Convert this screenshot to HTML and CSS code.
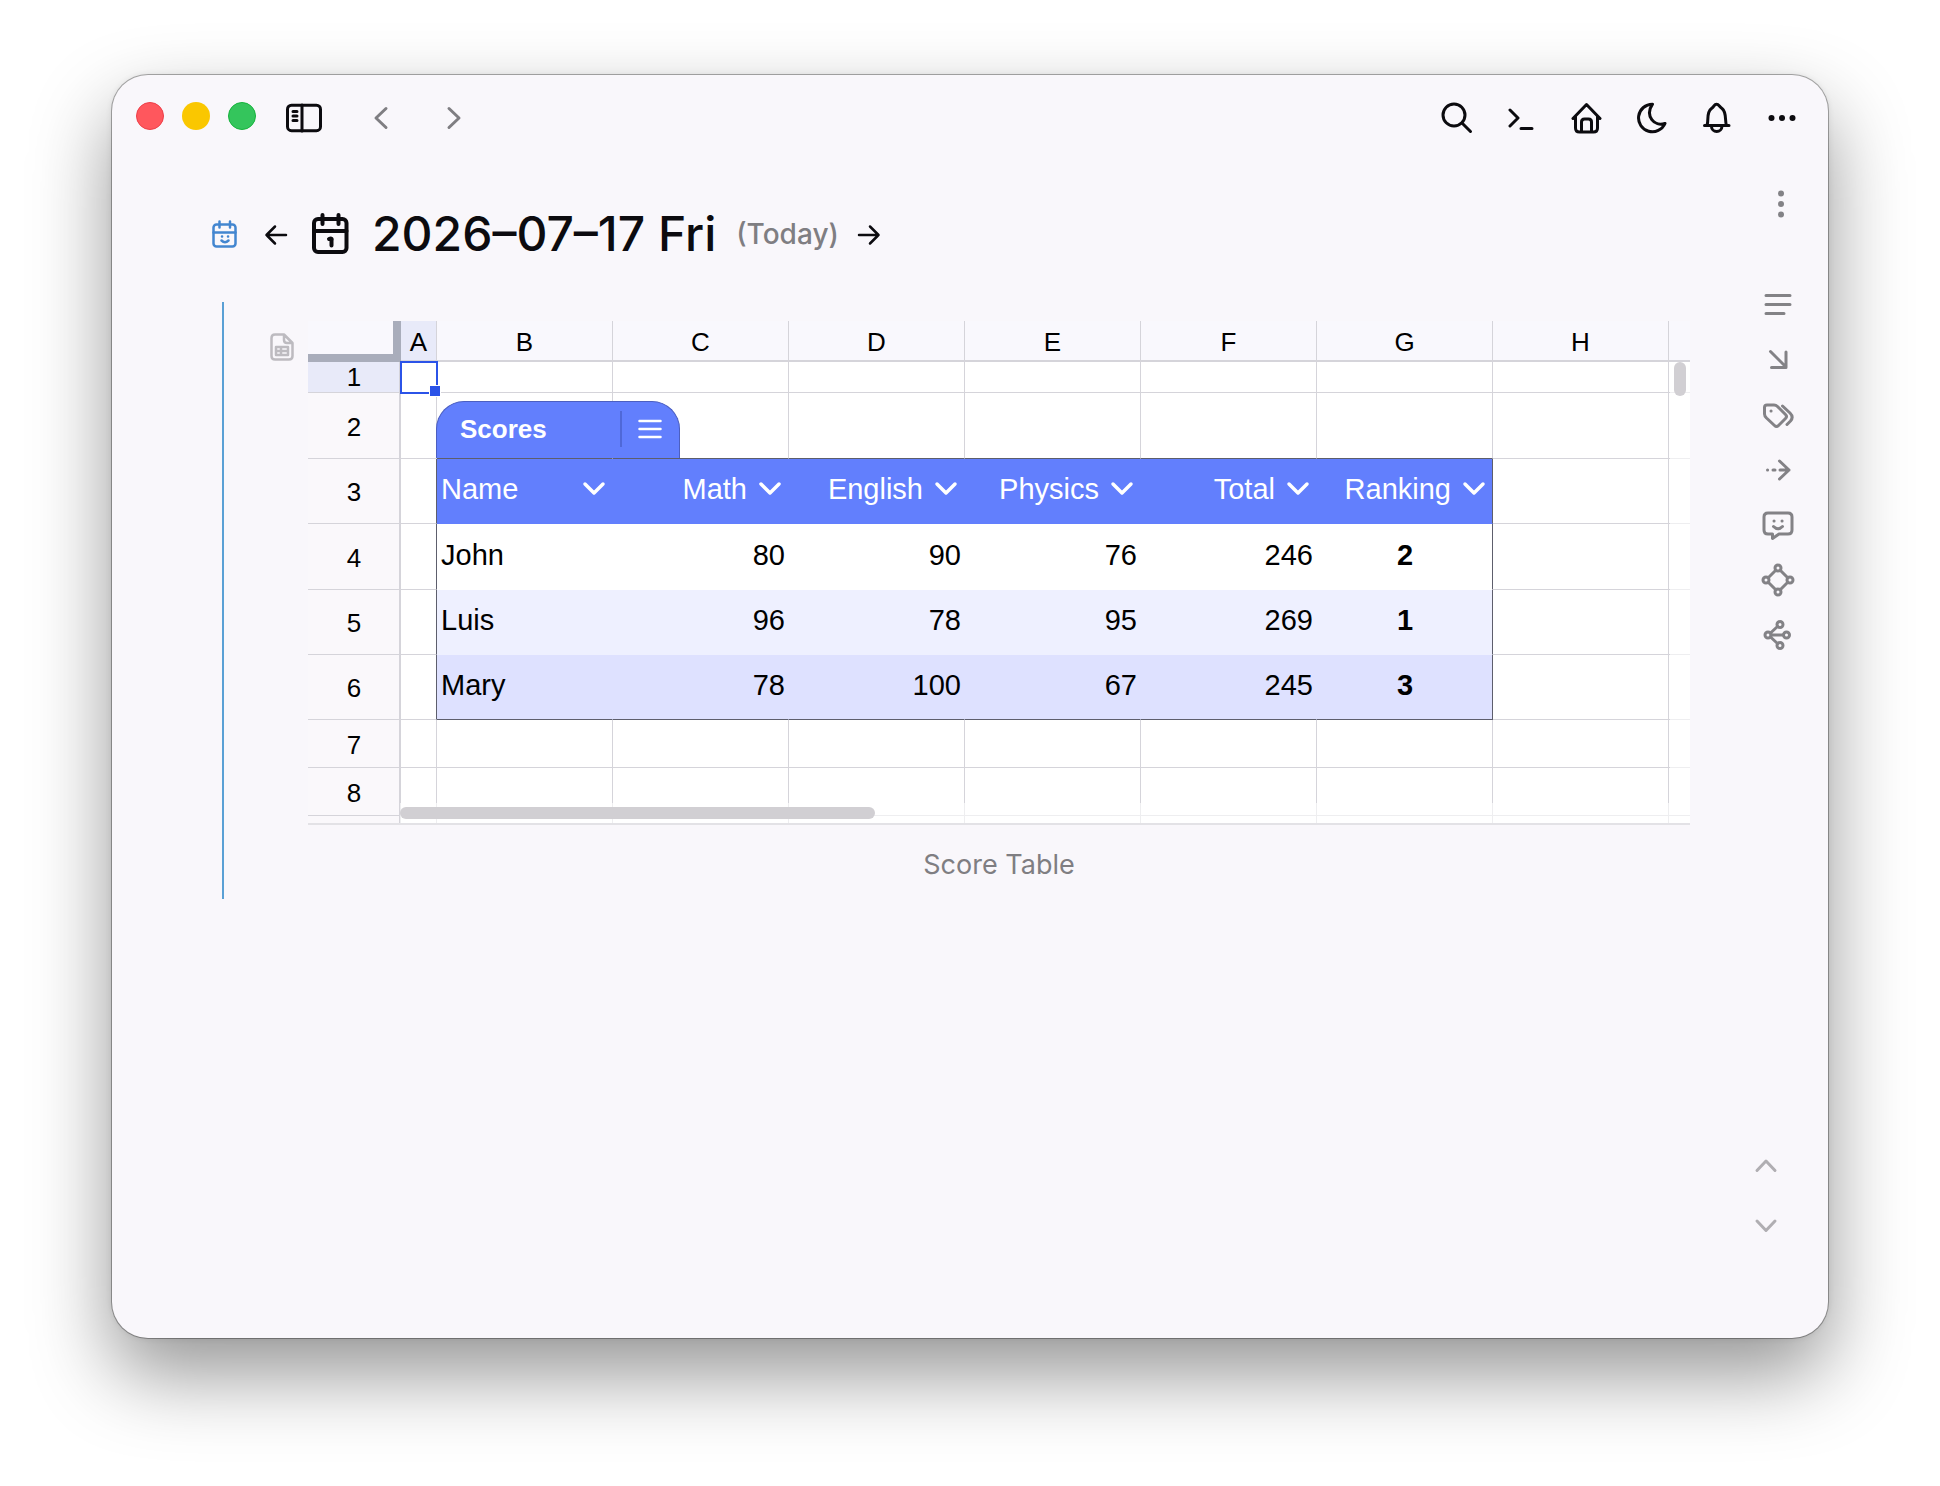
FILE: index.html
```html
<!DOCTYPE html>
<html lang="en">
<head>
    <meta charset="UTF-8">
    <meta name="viewport" content="width=device-width, initial-scale=1.0">
    <title>2026-07-17 Fri</title>
    <link rel="stylesheet" href="styles.css">
</head>
<body>
    <div class="window">
        <!-- Title bar -->
        <header class="titlebar">
            <div class="lights">
                <button class="light red" aria-label="Close"></button>
                <button class="light yellow" aria-label="Minimize"></button>
                <button class="light green" aria-label="Zoom"></button>
            </div>
            <button class="icon-btn sidebar-btn" aria-label="Toggle sidebar">
                <svg width="36" height="30" viewBox="0 0 36 30"><rect x="1.500" y="2.200" width="33" height="25.500" rx="4"/><path d="M16 2v26M7 8.500h4M7 13h4M7 17.500h4"/></svg>
            </button>
            <nav class="history">
                <button class="icon-btn" aria-label="Back">
                    <svg width="16" height="24" viewBox="0 0 16 24"><path d="M13 2.500 3 12l10 9.500"/></svg>
                </button>
                <button class="icon-btn" aria-label="Forward">
                    <svg width="16" height="24" viewBox="0 0 16 24"><path d="M3 2.500 13 12 3 21.500"/></svg>
                </button>
            </nav>
            <div class="actions">
                <button class="icon-btn" aria-label="Search">
                    <svg width="32" height="32" viewBox="0 0 32 32"><circle cx="13" cy="13" r="11"/><path d="m21 21 8.500 8.500"/></svg>
                </button>
                <button class="icon-btn" aria-label="Command">
                    <svg width="32" height="32" viewBox="0 0 32 32"><path d="m4 8 8 8-8 8M15 26.500h11"/></svg>
                </button>
                <button class="icon-btn" aria-label="Home">
                    <svg width="32" height="32" viewBox="0 0 32 32"><path d="M2 16.500 15.500 2.500l13.500 14M4.500 14.500V26q0 4 4 4h14q4 0 4-4V14.500M10.500 30V20q0-3 3-3h4q3 0 3 3v10"/></svg>
                </button>
                <button class="icon-btn" aria-label="Dark mode">
                    <svg width="32" height="32" viewBox="0 0 32 32"><path d="M16.500 2.200A13.800 13.800 0 1 0 29 21.500C18.500 25 8.500 14 16.500 2.200Z"/></svg>
                </button>
                <button class="icon-btn" aria-label="Notifications">
                    <svg width="32" height="32" viewBox="0 0 32 32"><path d="M3.500 23.500h24.500M6 23.500C8 18 5 10.500 10.500 6.500 13.500 4.500 13 2.300 15.500 2.300S18 4.500 21 6.500C26 10.500 23.500 18 25.500 23.500M10.500 24.500a5.200 5 0 0 0 10.400 0"/></svg>
                </button>
                <button class="icon-btn" aria-label="More">
                    <svg class="solid" width="32" height="32" viewBox="0 0 32 32"><circle cx="5.500" cy="16" r="3"/><circle cx="16" cy="16" r="3"/><circle cx="26.500" cy="16" r="3"/></svg>
                </button>
            </div>
        </header>

        <div class="body">
            <main class="page">
                <div class="day">
                    <svg class="day-mark" width="26" height="28" viewBox="0 0 26 28"><rect x="1.500" y="4.500" width="22" height="22" rx="3"/><path d="M1.500 12.500h22M7.500 1.500v6M18 1.500v6M9.500 20.500q3.500 3.500 7 0M10 16.500h.1M16 16.500h.1"/></svg>
                    <button class="step" aria-label="Previous day">
                        <svg width="24" height="24" viewBox="0 0 24 24"><path d="M22 13H2.500M11 4.500 2.500 13l8.500 8.500"/></svg>
                    </button>
                    <svg class="day-icon" width="38" height="42" viewBox="0 0 38 42"><rect x="2" y="6" width="32.500" height="33" rx="4"/><path d="M2 18h32.500M10.500 2v9M26.500 2v9M17 26q3.500-1.500 2.500 1.500v5"/></svg>
                    <h1>2026–07–17 Fri</h1>
                    <span class="today">(Today)</span>
                    <button class="step" aria-label="Next day">
                        <svg width="24" height="24" viewBox="0 0 24 24"><path d="M2 13h19.500M13 4.500l8.500 8.500-8.500 8.500"/></svg>
                    </button>
                </div>

                <section class="block">
                    <svg class="block-icon" width="24" height="28" viewBox="0 0 24 28"><path d="M14 1.500H5Q1.500 1.500 1.500 5v18Q1.500 26.500 5 26.500h14q3.500 0 3.500-3.500V10ZM14 1.500V7q0 3 3 3h5.500M6 14h12v8H6ZM6 18h12M11 14v8"/></svg>
                    <figure class="embed">
                        <div class="sheet">
                            <table>
                                <colgroup>
                                    <col class="col-head">
                                    <col class="col-a">
                                    <col span="7" class="col-wide">
                                    <col>
                                </colgroup>
                                <thead>
                                    <tr>
                                        <td class="corner"></td>
                                        <th class="active">A</th><th>B</th><th>C</th><th>D</th><th>E</th><th>F</th><th>G</th><th>H</th><th></th>
                                    </tr>
                                </thead>
                                <tbody>
                                    <tr class="r-small">
                                        <th class="active">1</th>
                                        <td class="selected"><span class="selection"></span></td><td></td><td></td><td></td><td></td><td></td><td></td><td></td><td></td>
                                    </tr>
                                    <tr class="r-tall before">
                                        <th>2</th>
                                        <td></td>
                                        <td class="has-tab">
                                            <div class="tab">
                                                <span class="tab-name">Scores</span>
                                                <button class="tab-menu" aria-label="Table menu">
                                                    <svg width="24" height="20" viewBox="0 0 24 20"><path d="M1.500 2h21M1.500 10h21M1.500 18h21"/></svg>
                                                </button>
                                            </div>
                                        </td>
                                        <td></td><td></td><td></td><td></td><td></td><td></td><td></td>
                                    </tr>
                                    <tr class="r-mid data heading">
                                        <th>3</th>
                                        <td></td>
                                        <td><div class="field first">Name <button aria-label="Filter Name"><svg width="24" height="16" viewBox="0 0 24 16"><path d="m3 3 9 9 9-9"/></svg></button></div></td>
                                        <td><div class="field">Math <button aria-label="Filter Math"><svg width="24" height="16" viewBox="0 0 24 16"><path d="m3 3 9 9 9-9"/></svg></button></div></td>
                                        <td><div class="field">English <button aria-label="Filter English"><svg width="24" height="16" viewBox="0 0 24 16"><path d="m3 3 9 9 9-9"/></svg></button></div></td>
                                        <td><div class="field">Physics <button aria-label="Filter Physics"><svg width="24" height="16" viewBox="0 0 24 16"><path d="m3 3 9 9 9-9"/></svg></button></div></td>
                                        <td><div class="field">Total <button aria-label="Filter Total"><svg width="24" height="16" viewBox="0 0 24 16"><path d="m3 3 9 9 9-9"/></svg></button></div></td>
                                        <td><div class="field">Ranking <button aria-label="Filter Ranking"><svg width="24" height="16" viewBox="0 0 24 16"><path d="m3 3 9 9 9-9"/></svg></button></div></td>
                                        <td></td><td></td>
                                    </tr>
                                    <tr class="r-tall data">
                                        <th>4</th>
                                        <td></td><td>John</td><td>80</td><td>90</td><td>76</td><td>246</td><td>2</td><td></td><td></td>
                                    </tr>
                                    <tr class="r-mid data tint">
                                        <th>5</th>
                                        <td></td><td>Luis</td><td>96</td><td>78</td><td>95</td><td>269</td><td>1</td><td></td><td></td>
                                    </tr>
                                    <tr class="r-mid data tint-strong last">
                                        <th>6</th>
                                        <td></td><td>Mary</td><td>78</td><td>100</td><td>67</td><td>245</td><td>3</td><td></td><td></td>
                                    </tr>
                                    <tr class="r-plain">
                                        <th>7</th>
                                        <td></td><td></td><td></td><td></td><td></td><td></td><td></td><td></td><td></td>
                                    </tr>
                                    <tr class="r-plain">
                                        <th>8</th>
                                        <td></td><td></td><td></td><td></td><td></td><td></td><td></td><td></td><td></td>
                                    </tr>
                                    <tr class="r-cut">
                                        <th></th>
                                        <td></td><td></td><td></td><td></td><td></td><td></td><td></td><td></td><td></td>
                                    </tr>
                                </tbody>
                            </table>
                            <div class="track track-x"><div class="thumb"></div></div>
                            <div class="track track-y"><div class="thumb"></div></div>
                        </div>
                        <figcaption>Score Table</figcaption>
                    </figure>
                </section>
            </main>

            <!-- Right rail -->
            <aside class="rail">
                <button class="icon-btn rail-more" aria-label="Page menu">
                    <svg class="solid" width="32" height="32" viewBox="0 0 32 32"><circle cx="19" cy="5.500" r="3"/><circle cx="19" cy="16" r="3"/><circle cx="19" cy="26.500" r="3"/></svg>
                </button>
                <div class="rail-tools">
                    <button class="icon-btn" aria-label="Outline">
                        <svg width="32" height="32" viewBox="0 0 32 32"><path d="M4 6.500h24M4 15.500h24M4 24.500h18"/></svg>
                    </button>
                    <button class="icon-btn" aria-label="Inline links">
                        <svg width="32" height="32" viewBox="0 0 32 32"><path d="m8.500 7.500 15 15M24 8v15.500H9.500"/></svg>
                    </button>
                    <button class="icon-btn" aria-label="Tags">
                        <svg width="32" height="32" viewBox="0 0 32 32"><path d="M2.500 8.500Q2.500 6 5 6h7q2 0 3.500 1.500l8 8q2 2 0 4l-7 7q-2 2-4 0l-8-7.500Q2.500 17 2.500 15ZM20.500 7l7.500 7q4 4 .5 8L25 25.500M9 12h.1"/></svg>
                    </button>
                    <button class="icon-btn" aria-label="References">
                        <svg width="32" height="32" viewBox="0 0 32 32"><path d="M5.500 16h.1M11 16h2M18 16h9M17.500 7l9.500 9-9.500 9"/></svg>
                    </button>
                    <button class="icon-btn" aria-label="Comments">
                        <svg width="32" height="32" viewBox="0 0 32 32"><path d="M6 4h20q4 0 4 4v13q0 4-4 4h-9l-6.500 4.500V25H6q-4 0-4-4V8q0-4 4-4ZM11.500 17.500q4.500 4.500 9 0M12 12h.1M20 12h.1"/></svg>
                    </button>
                    <button class="icon-btn" aria-label="Graph">
                        <svg width="34" height="34" viewBox="0 0 34 34"><circle cx="17" cy="5" r="3"/><circle cx="29" cy="17" r="3"/><circle cx="17" cy="29" r="3"/><circle cx="5" cy="17" r="3"/><path d="m14.500 7.500-7 7M19.500 7.500l7 7M7.500 19.500l7 7M26.500 19.500l-7 7"/></svg>
                    </button>
                    <button class="icon-btn" aria-label="Mind map">
                        <svg width="32" height="32" viewBox="0 0 32 32"><circle cx="6" cy="16" r="3"/><circle cx="18" cy="5.500" r="3"/><circle cx="24.500" cy="16" r="3"/><circle cx="18" cy="26.500" r="3"/><path d="M9 16h12.500M8.500 14l7-6.500M8.500 18l7 6.500"/></svg>
                    </button>
                </div>
                <div class="pager">
                    <button class="icon-btn" aria-label="Scroll up">
                        <svg width="24" height="16" viewBox="0 0 24 16"><path d="m3 12.500 9-9.500 9 9.500"/></svg>
                    </button>
                    <button class="icon-btn" aria-label="Scroll down">
                        <svg width="24" height="16" viewBox="0 0 24 16"><path d="m3 3 9 9.500L21 3"/></svg>
                    </button>
                </div>
            </aside>
        </div>
    </div>
</body>
</html>
```
FILE: styles.css
```css
* {
    box-sizing: border-box;
}

body {
    margin: 0;
    padding: 75px 112px 148px;
    min-height: 100vh;
    background: #fff;
    color: #0c0b0f;
    font-family: Inter, "Liberation Sans", sans-serif;
    display: flex;
}

button {
    border: 0;
    padding: 0;
    background: none;
    color: inherit;
    font: inherit;
    cursor: pointer;
}

svg {
    display: block;
    flex: none;
    fill: none;
    stroke: currentColor;
    stroke-width: 2.5;
    stroke-linecap: round;
    stroke-linejoin: round;
}

svg.solid {
    fill: currentColor;
    stroke: none;
}

/* Window frame */
.window {
    flex: 1;
    min-width: 0;
    display: flex;
    flex-direction: column;
    border-radius: 36px;
    background: #f9f7fb;
    box-shadow: 0 0 0 1px rgba(0,0,0,0.3), 0 0 6px rgba(0,0,0,0.1), 0 36px 80px rgba(0,0,0,0.42);
}

.titlebar {
    display: flex;
    align-items: center;
    height: 85px;
    padding: 0 14px 0 24px;
}

.titlebar svg:not(.solid) {
    stroke-width: 3;
}

.lights {
    display: flex;
    gap: 18px;
    padding-bottom: 3px;
}

.light {
    width: 28px;
    height: 28px;
    border-radius: 50%;
}

.red {
    background: #ff575d;
    border: 1px solid #ee3e48;
}

.yellow {
    background: #fac700;
}

.green {
    background: #34c55c;
    border: 1px solid #16b33c;
}

.icon-btn {
    display: flex;
    align-items: center;
    justify-content: center;
}

.sidebar-btn {
    width: 48px;
    height: 48px;
    margin: 0 29px 0 24px;
}

.history {
    display: flex;
    gap: 25px;
    color: #7f7e82;
}

.history .icon-btn {
    width: 48px;
    height: 48px;
}

.actions {
    display: flex;
    margin-left: auto;
}

.actions .icon-btn {
    width: 65px;
    height: 48px;
}

.body {
    flex: 1;
    display: flex;
}

/* Page content */
.page {
    flex: 1;
    min-width: 0;
    padding: 44px 50px 0 100px;
}

.day {
    display: flex;
    align-items: center;
    height: 60px;
}

.day-mark {
    color: #4386d0;
    margin-right: 26px;
}

.day-icon {
    stroke-width: 4;
    margin: 0 22px 0 24px;
}

h1 {
    margin: 0;
    font-size: 48px;
    font-weight: 500;
    line-height: 60px;
}

.today {
    margin: 0 18px 0 20px;
    font-size: 28px;
    font-weight: 500;
    color: #7f7e82;
}

.block {
    display: flex;
    margin: 38px 0 0 10px;
    padding: 19px 0 14px 46px;
    border-left: 2px solid #5aa0d5;
}

.block-icon {
    margin: 12px 14px 0 0;
    color: #bdbbc0;
}

.embed {
    flex: 1;
    min-width: 0;
    margin: 0;
}

figcaption {
    margin-top: 20px;
    line-height: 40px;
    font-size: 27px;
    text-align: center;
    color: #7f7e82;
}

/* Spreadsheet */
.sheet {
    position: relative;
    border-bottom: 2px solid #e3e2e6;
    font-family: "Liberation Sans", Arial, sans-serif;
    color: #000;
}

table {
    width: 100%;
    table-layout: fixed;
    border-collapse: separate;
    border-spacing: 0;
}

.col-head {
    width: 93px;
}

.col-a {
    width: 36px;
}

.col-wide {
    width: 176px;
}

td,
th {
    padding: 0;
    border: 0 solid #d5d4da;
    border-width: 0 1px 1px 0;
}

th {
    font-size: 26px;
    line-height: 30px;
    font-weight: normal;
}

td {
    background: #fff;
    font-size: 29px;
    line-height: 34px;
}

td:last-child,
th:last-child {
    border-right: 0;
}

thead th {
    height: 41px;
    padding-top: 3px;
    border-bottom-width: 2px;
    background: #f9f8fd;
}

.corner {
    background: #f9f8fd;
    border-color: #a9adbb;
    border-width: 0 8px 8px 0;
}

tbody th {
    padding: 2px 0 0 1px;
    border-right-width: 2px;
    background: #faf8fb;
}

th.active {
    background: #e8eaf9;
}

/* the row number's line height would push the first row past its height */
.r-small th {
    padding-top: 0;
}

.r-small > * {
    height: 31px;
}

.r-tall > * {
    height: 66px;
}

.r-mid > * {
    height: 65px;
}

.r-plain > * {
    height: 48px;
}

.r-cut > * {
    height: 7px;
    padding: 0;
    border-bottom: 0;
}

/* Score table inside the grid: columns B to G */
.before td:nth-child(n+3):nth-child(-n+8) {
    border-bottom-color: #5d5e6c;
}

.data td {
    padding: 0 3px 4px 4px;
    text-align: right;
}

.data td:nth-child(n+3):nth-child(-n+8) {
    border-color: transparent;
}

.data td:nth-child(2),
.data td:nth-child(8) {
    border-right-color: #5d5e6c !important;
}

.data td:nth-child(3) {
    text-align: left;
}

.data td:nth-child(8) {
    text-align: center;
    font-weight: bold;
}

.heading td:nth-child(n+3):nth-child(-n+8) {
    background: #627ffd;
    color: #fff;
    font-weight: normal;
}

.tint td:nth-child(n+3):nth-child(-n+8) {
    background: #eef0ff;
}

.tint-strong td:nth-child(n+3):nth-child(-n+8) {
    background: #dee1ff;
}

.last td:nth-child(n+3):nth-child(-n+8) {
    border-bottom-color: #5d5e6c;
}

.field {
    display: flex;
    align-items: center;
    justify-content: flex-end;
    gap: 11px;
    padding-right: 3px;
}

.field.first {
    justify-content: space-between;
}

.field svg {
    stroke-width: 3.5;
}

.has-tab,
.selected {
    position: relative;
}

.tab {
    position: absolute;
    left: -1px;
    bottom: 0;
    z-index: 1;
    display: flex;
    align-items: center;
    width: 244px;
    height: 57px;
    padding-bottom: 2px;
    border: 1px solid #4c5fc0;
    border-bottom: 0;
    border-radius: 28px 28px 0 0;
    background: #627ffd;
    color: #fff;
}

.tab-name {
    flex: 1;
    padding-left: 23px;
    font-size: 26px;
    font-weight: bold;
}

.tab-menu {
    height: 36px;
    padding: 0 17px 0 16px;
    border-left: 2px solid #4f68d8;
}

.selection {
    position: absolute;
    inset: -1px -2px -2px -1px;
    z-index: 1;
    border: 2px solid #2b53e8;
}

.selection::after {
    content: "";
    position: absolute;
    right: -5px;
    bottom: -5px;
    width: 10px;
    height: 10px;
    border: 1px solid #fff;
    background: #2b53e8;
}

.track {
    position: absolute;
    background: rgba(255,255,255,0.6);
}

.track-x {
    left: 92px;
    right: 0;
    bottom: 0;
    height: 20px;
    padding-top: 4px;
}

.track-y {
    top: 41px;
    right: 0;
    bottom: 20px;
    width: 20px;
    padding-left: 4px;
}

.thumb {
    width: 12px;
    height: 34px;
    border-radius: 6px;
    background: #d1cfd3;
}

.track-x .thumb {
    width: 475px;
    height: 12px;
}

/* Right rail */
.rail {
    display: flex;
    flex-direction: column;
    width: 88px;
    padding: 24px 12px 82px 0;
    color: #838286;
}

.rail svg {
    stroke-width: 3;
}

.rail-more {
    height: 40px;
}

.rail-tools {
    display: flex;
    flex-direction: column;
    margin-top: 53px;
}

.rail-tools .icon-btn {
    height: 55px;
}

.pager {
    display: flex;
    flex-direction: column;
    margin-top: auto;
    padding-right: 24px;
    color: #b0aeb2;
}

.pager .icon-btn {
    height: 60px;
}
```
